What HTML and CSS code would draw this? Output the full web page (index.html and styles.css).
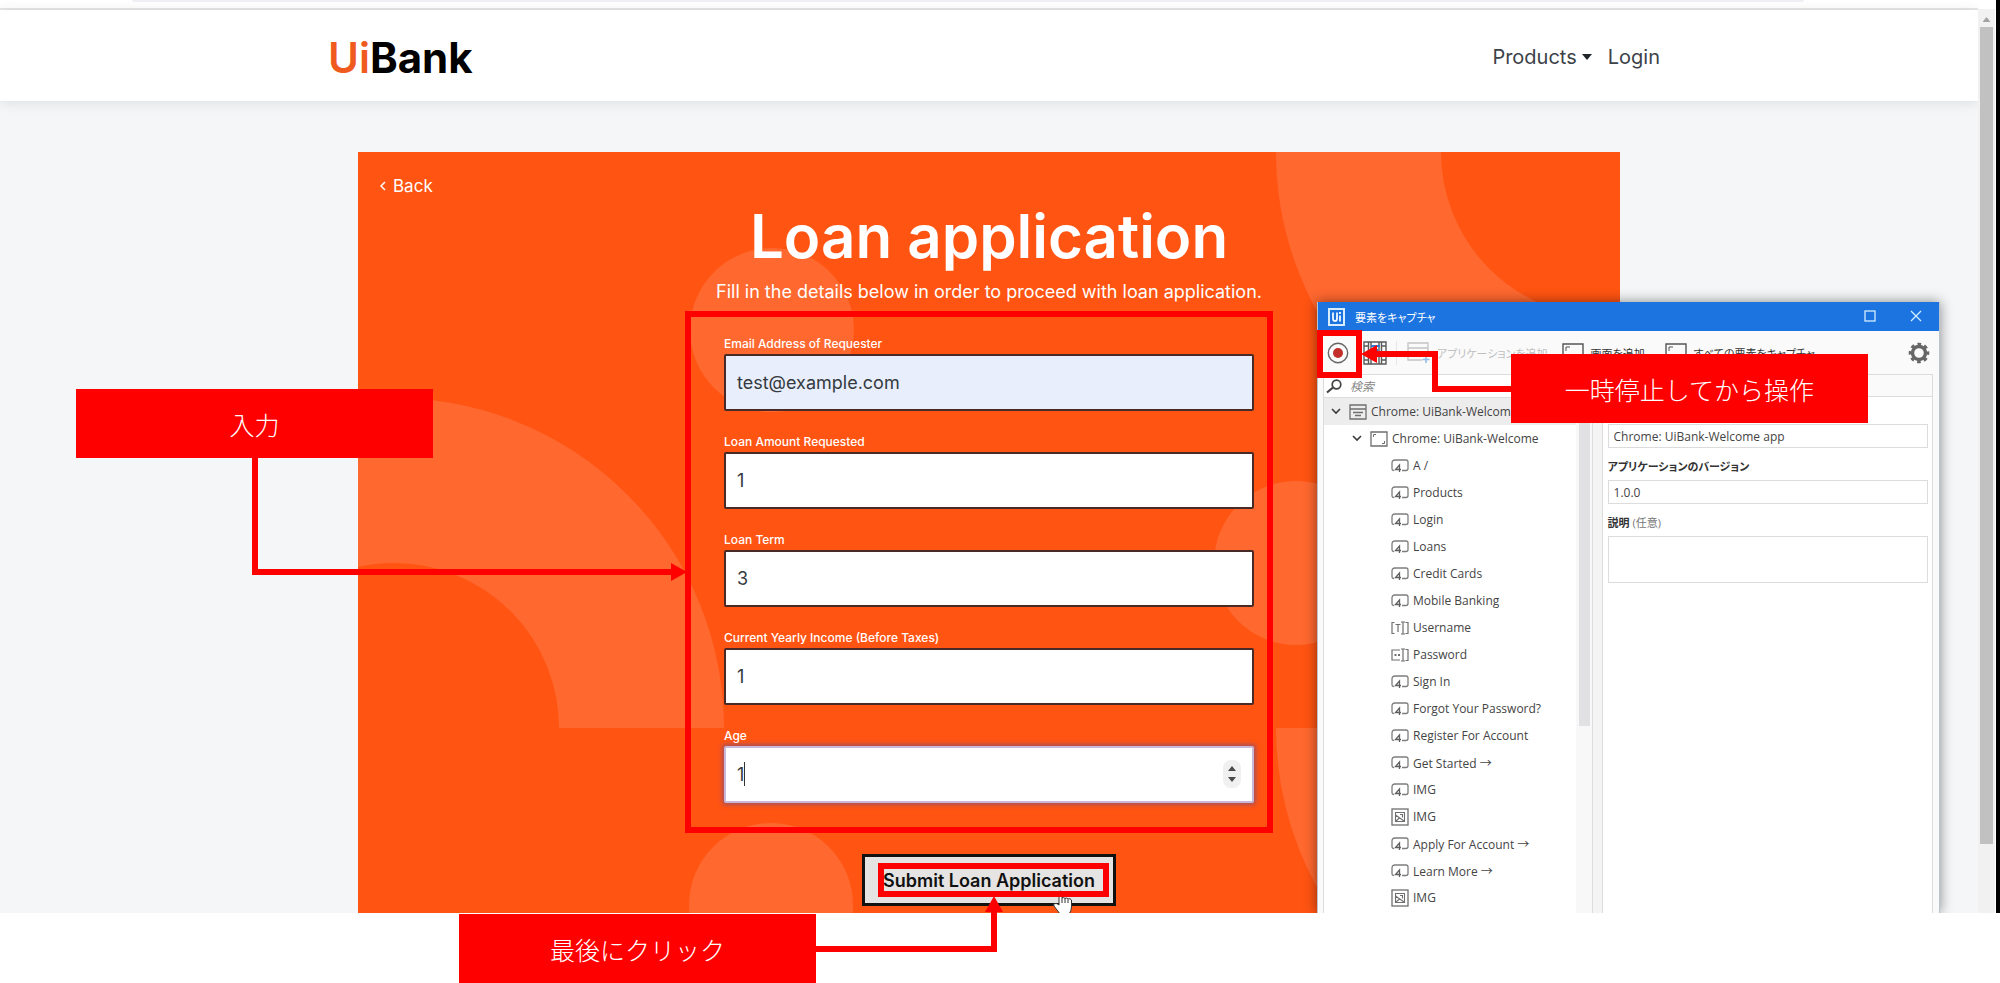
FILE: index.html
```html
<!DOCTYPE html>
<html lang="ja">
<head>
    <meta charset="UTF-8">
    <title>UiBank - Loan application</title>
    <link rel="stylesheet" href="styles.css">
</head>
<body>
    <!-- shared icons -->
    <svg class="sprite" aria-hidden="true">
        <symbol id="i-click" viewBox="0 0 18 14">
            <path d="M3 11.500Q1 11.500 1 9.500V4Q1 1 4 1H15Q17 1 17 3V9.500Q17 11.500 15 11.500H11" fill="none" stroke="#7d7d7d" stroke-width="1.300"/>
            <path d="M8.500 13V6L4.500 10.500H10" fill="none" stroke="#5f5f5f" stroke-width="1.300"/>
        </symbol>
        <symbol id="i-text" viewBox="0 0 18 14">
            <path d="M3.500 1.500H1V12.500H3.500M14.500 1.500H17V12.500H14.500M4.500 3.500H9.500M7 3.500V11M10 1H14M10 13H14M12 1V13" fill="none" stroke="#6f6f6f" stroke-width="1.200"/>
        </symbol>
        <symbol id="i-pass" viewBox="0 0 18 14">
            <path d="M9 2H1V12H9M14.500 1.500H17V12.500H14.500M10 1H14M10 13H14M12 1V13" fill="none" stroke="#6f6f6f" stroke-width="1.200"/>
            <path d="M3.500 6H5.500V8H3.500zM7 6H9V8H7z" fill="#6f6f6f"/>
        </symbol>
        <symbol id="i-img" viewBox="0 0 18 18">
            <rect x="1" y="1" width="16" height="16" fill="none" stroke="#6f6f6f" stroke-width="1.300"/>
            <path d="M4.500 4.500H13.500V13.500H4.500zM4.500 7L13 13M5 13L8.500 10M9 6.500H11.500V9.500" fill="none" stroke="#6f6f6f" stroke-width="1.100"/>
        </symbol>
        <symbol id="i-app" viewBox="0 0 18 16">
            <path d="M1 1H17V15H1zM1 5H17M4 8.500H14M6 11.500H12" fill="none" stroke="#6f6f6f" stroke-width="1.300"/>
        </symbol>
        <symbol id="i-screen" viewBox="0 0 18 16">
            <path d="M1 1H17V15H1z" fill="none" stroke="#6f6f6f" stroke-width="1.300"/>
            <path d="M3.500 6V3.500H6M14.500 10V12.500H12" fill="none" stroke="#6f6f6f"/>
        </symbol>
        <symbol id="i-down" viewBox="0 0 10 7">
            <path d="M1 1L5 5L9 1" fill="none" stroke="#3b3b3b" stroke-width="1.600"/>
        </symbol>
        <symbol id="i-frame" viewBox="0 0 22 20">
            <path d="M1 1H21V19H1z" fill="none" stroke="#555" stroke-width="1.400"/>
            <path d="M4 8V4H8M18 12V16H14" fill="none" stroke="#555"/>
        </symbol>
    </svg>

    <div class="browser">
        <div class="viewport">
            <div class="toolbar-edge"><div class="address"></div></div>
            <header class="site-header">
                <div class="header-inner">
                    <a class="brand" href="#"><span>Ui</span>Bank</a>
                    <nav class="site-nav">
                        <button class="nav-item" type="button">Products<span class="nav-caret"></span></button>
                        <a class="nav-item" href="#">Login</a>
                    </nav>
                </div>
            </header>

            <main class="card">
                <svg class="card-shapes" aria-hidden="true">
                    <g fill="none" stroke="#ff682f" stroke-width="165">
                        <path d="M283.500 576A247.500 247.500 0 0 0 -211.500 576"/>
                        <path d="M1000.500 0A247.500 247.500 0 0 0 1248 247.500"/>
                        <path d="M1000.500 576A247.500 247.500 0 0 0 1248 823.500"/>
                    </g>
                    <g fill="#ff682f">
                        <circle cx="414" cy="178" r="82"/>
                        <circle cx="938" cy="411" r="82"/>
                        <circle cx="413" cy="753" r="82"/>
                    </g>
                </svg>
                <a class="back" href="#"><svg width="6" height="10" viewBox="0 0 6 10"><path d="M5 1L1 5L5 9" fill="none" stroke="#fff" stroke-width="1.500"/></svg>Back</a>
                <form class="loan-form">
                    <h1>Loan application</h1>
                    <p class="lead">Fill in the details below in order to proceed with loan application.</p>
                    <div class="field">
                        <label for="email">Email Address of Requester</label>
                        <input class="filled" id="email" type="email" value="test@example.com">
                    </div>
                    <div class="field">
                        <label for="amount">Loan Amount Requested</label>
                        <input id="amount" type="number" value="1">
                    </div>
                    <div class="field">
                        <label for="term">Loan Term</label>
                        <input id="term" type="number" value="3">
                    </div>
                    <div class="field">
                        <label for="income">Current Yearly Income (Before Taxes)</label>
                        <input id="income" type="number" value="1">
                    </div>
                    <div class="field">
                        <label for="age">Age</label>
                        <input class="active" id="age" type="number" value="1">
                        <span class="text-caret"></span>
                        <svg class="spinner" width="18" height="28" viewBox="0 0 18 28" aria-hidden="true">
                            <rect width="18" height="28" rx="8" fill="#f0f0f0"/>
                            <path d="M5 11L9 6L13 11zM5 17L9 22L13 17z" fill="#4a4a4a"/>
                        </svg>
                    </div>
                    <button class="submit" type="submit">Submit Loan Application</button>
                </form>
            </main>

            <section class="capture">
                <div class="capture-title">
                    <svg width="17" height="18" viewBox="0 0 17 18" aria-hidden="true">
                        <rect x="1" y="1" width="15" height="16" fill="none" stroke="#d8ecff" stroke-width="2"/>
                        <path d="M5 4.500V10.500Q5 13 7 13Q9 13 9 10.500V4.500M12 7.500V13.500M12 4V6" fill="none" stroke="#fff" stroke-width="1.700"/>
                    </svg>
                    <h2>要素をキャプチャ</h2>
                    <button class="win-btn" type="button" aria-label="最大化"><svg width="12" height="12"><rect x="1" y="1" width="10" height="10" fill="none" stroke="#d4efff" stroke-width="1.300"/></svg></button>
                    <button class="win-btn" type="button" aria-label="閉じる"><svg width="12" height="12"><path d="M1 1L11 11M11 1L1 11" stroke="#d4efff" stroke-width="1.300"/></svg></button>
                </div>
                <div class="capture-tools">
                    <button class="tool" type="button" aria-label="記録"><svg width="22" height="22" viewBox="0 0 22 22"><circle cx="11" cy="11" r="9.700" fill="none" stroke="#666" stroke-width="1.400"/><circle cx="11" cy="11" r="5" fill="#c22f2a"/></svg></button>
                    <button class="tool film" type="button" aria-label="録画"><svg width="24" height="24" viewBox="0 0 24 24"><path d="M1 1H23V23H1zM5.500 1V23M8 1V23M16 1V23M18.500 1V23M1 5H5M1 19H5M19 5H23M19 19H23" fill="none" stroke="#5a5a5a" stroke-width="1.400"/><path d="M8 5H17M11 9H15" stroke="#2b7bd6" stroke-width="2"/></svg></button>
                    <button class="tool add-app" type="button" disabled><svg width="23" height="22" viewBox="0 0 23 22"><path d="M15 18H1V1H21V13M1 6H21M4 10H18M4 14H14" fill="none" stroke="#c4c4c4" stroke-width="1.300"/><path d="M19 14V21M15.500 17.500H22.500" stroke="#8fb9e6" stroke-width="1.500"/></svg>アプリケーションを追加</button>
                    <button class="tool add-screen" type="button"><svg width="22" height="20"><use href="#i-frame"/></svg>画面を追加</button>
                    <button class="tool add-all" type="button"><svg width="22" height="20"><use href="#i-frame"/></svg>すべての要素をキャプチャ</button>
                    <button class="tool gear" type="button" aria-label="設定"><svg width="22" height="22" viewBox="0 0 22 22"><circle cx="11" cy="11" r="6.500" fill="none" stroke="#666" stroke-width="3.400"/><circle cx="11" cy="11" r="8.800" fill="none" stroke="#666" stroke-width="3" stroke-dasharray="3.600 3.310" stroke-dashoffset="1.800"/></svg></button>
                </div>
                <div class="capture-body">
                    <div class="tree-panel">
                        <div class="search">
                            <svg width="17" height="15" viewBox="0 0 17 15"><circle cx="10.500" cy="5.500" r="4.300" fill="none" stroke="#444" stroke-width="1.700"/><path d="M7 8.500L1 13.500" stroke="#444" stroke-width="2.200"/></svg>
                            <input type="search" placeholder="検索" aria-label="検索">
                        </div>
                        <div class="tree-wrap">
                            <ul class="tree">
                                <li class="root"><svg width="10" height="7"><use href="#i-down"/></svg><svg width="18" height="16"><use href="#i-app"/></svg>Chrome: UiBank-Welcome</li>
                                <li class="screen"><svg width="10" height="7"><use href="#i-down"/></svg><svg width="18" height="16"><use href="#i-screen"/></svg>Chrome: UiBank-Welcome</li>
                                <li><svg width="18" height="14"><use href="#i-click"/></svg>A /</li>
                                <li><svg width="18" height="14"><use href="#i-click"/></svg>Products</li>
                                <li><svg width="18" height="14"><use href="#i-click"/></svg>Login</li>
                                <li><svg width="18" height="14"><use href="#i-click"/></svg>Loans</li>
                                <li><svg width="18" height="14"><use href="#i-click"/></svg>Credit Cards</li>
                                <li><svg width="18" height="14"><use href="#i-click"/></svg>Mobile Banking</li>
                                <li><svg width="18" height="14"><use href="#i-text"/></svg>Username</li>
                                <li><svg width="18" height="14"><use href="#i-pass"/></svg>Password</li>
                                <li><svg width="18" height="14"><use href="#i-click"/></svg>Sign In</li>
                                <li><svg width="18" height="14"><use href="#i-click"/></svg>Forgot Your Password?</li>
                                <li><svg width="18" height="14"><use href="#i-click"/></svg>Register For Account</li>
                                <li><svg width="18" height="14"><use href="#i-click"/></svg>Get Started →</li>
                                <li><svg width="18" height="14"><use href="#i-click"/></svg>IMG</li>
                                <li><svg width="18" height="18"><use href="#i-img"/></svg>IMG</li>
                                <li><svg width="18" height="14"><use href="#i-click"/></svg>Apply For Account →</li>
                                <li><svg width="18" height="14"><use href="#i-click"/></svg>Learn More →</li>
                                <li><svg width="18" height="18"><use href="#i-img"/></svg>IMG</li>
                            </ul>
                            <div class="tree-scroll"><div class="tree-thumb"></div></div>
                        </div>
                    </div>
                    <div class="splitter"></div>
                    <div class="props">
                        <div class="props-head"></div>
                        <div class="props-fields">
                            <input type="text" value="Chrome: UiBank-Welcome app" aria-label="アプリケーション名">
                            <label for="version">アプリケーションのバージョン</label>
                            <input id="version" type="text" value="1.0.0">
                            <label for="note">説明 <span>(任意)</span></label>
                            <textarea id="note"></textarea>
                        </div>
                    </div>
                </div>
            </section>

            <svg class="pointer" width="22" height="26" viewBox="0 0 22 26" aria-hidden="true">
                <path d="M7 13V3Q7 1 8.500 1Q10 1 10 3V8Q11.500 7 13 8.500Q14.500 7.500 16 9Q18 8 19.500 10V17Q19.500 21 17 24V26H8V24L2 16Q1 14 3 13.500Q5 13 7 15z" fill="#fff" stroke="#333"/>
                <path d="M10 8V13M13 9V13M16 9.500V13" stroke="#333"/>
            </svg>
        </div>
        <div class="scrollbar"><span class="scroll-up"></span><div class="scroll-thumb"></div></div>
        <div class="screen-edge"></div>
    </div>
    <div class="page-bottom"></div>

    <!-- step annotations -->
    <div class="annotations">
        <svg class="connectors" aria-hidden="true">
            <g fill="none" stroke="#f00" stroke-width="6">
                <path d="M255 457V572H673"/>
                <path d="M816 949H994V910"/>
                <path d="M1511 389H1435V354H1375"/>
                <rect x="688" y="314" width="582" height="516"/>
                <rect x="881" y="866" width="225" height="28"/>
                <rect x="1320" y="333" width="39" height="42"/>
            </g>
            <path d="M671 563L687 572L671 581zM985 912L994 896L1003 912zM1377 345L1361 354L1377 363z" fill="#f00"/>
        </svg>
        <div class="callout callout-input">入力</div>
        <div class="callout callout-pause">一時停止してから操作</div>
        <div class="callout callout-click">最後にクリック</div>
    </div>
</body>
</html>
```
FILE: styles.css
```css
* {
    box-sizing: border-box;
}

body {
    font-family: Inter, "Noto Sans CJK JP", sans-serif;
    background-color: #fff;
    color: #212529;
    margin: 0;
    height: 100vh;
    display: flex;
    flex-direction: column;
    position: relative;
    overflow: hidden;
}

button, input, textarea {
    font-family: inherit;
}

.sprite {
    position: absolute;
    width: 0;
    height: 0;
}

/* Browser frame */
.browser {
    flex: 1;
    min-height: 0;
    display: flex;
}

.page-bottom {
    height: 70px;
    flex: none;
}

.viewport {
    flex: 1;
    min-width: 0;
    position: relative;
    overflow: hidden;
    background-color: #f5f6f8;
}

.toolbar-edge {
    height: 10px;
    padding: 0 174px 0 132px;
    background-color: #fff;
    border-bottom: 2px solid #e6e6e8;
}

.address {
    height: 2px;
    background-color: #eff0f5;
    border-radius: 0 0 4px 4px;
}

.scrollbar {
    width: 18px;
    margin-top: 9px;
    padding: 6px 2px 0;
    background-color: #f1f1f1;
    border-right: 1px solid #fff;
}

.scroll-up {
    display: block;
    width: 8px;
    height: 5px;
    margin: 2px auto 5px;
    background-color: #a3a3a3;
    clip-path: polygon(50% 0, 100% 100%, 0 100%);
}

.scroll-thumb {
    height: 91%;
    background-color: #c1c1c1;
}

.screen-edge {
    width: 4px;
    background-color: #000;
}

/* Site header */
.site-header {
    background-color: #fff;
    box-shadow: 0 2px 12px rgba(0, 0, 0, 0.1);
}

.header-inner {
    max-width: 1342px;
    height: 91px;
    margin: 0 auto;
    padding: 3px 0 0 10px;
    display: flex;
    align-items: center;
    justify-content: space-between;
}

.brand {
    font-size: 42px;
    font-weight: 700;
    color: #000;
    text-decoration: none;
}

.brand span {
    font-weight: 600;
    color: #f05a1e;
}

.site-nav {
    display: flex;
    gap: 16px;
}

.nav-item {
    display: flex;
    align-items: center;
    gap: 5px;
    padding: 0;
    border: none;
    background: none;
    font-size: 20px;
    line-height: 28px;
    color: #3c4248;
    text-decoration: none;
}

.nav-caret {
    border: 5px solid transparent;
    border-top: 6px solid #212529;
    border-bottom: 0;
}

/* Loan card */
.card {
    position: relative;
    max-width: 1262px;
    height: 900px;
    margin: 51px auto 0;
    padding: 20px 22px;
    background-color: #ff5412;
    overflow: hidden;
    color: #fff;
}

.card-shapes {
    position: absolute;
    inset: 0;
    width: 100%;
    height: 100%;
}

.back {
    position: relative;
    display: inline-flex;
    align-items: center;
    gap: 7px;
    font-size: 17px;
    line-height: 28px;
    color: #fff;
    text-decoration: none;
}

.loan-form {
    position: relative;
    display: flex;
    flex-direction: column;
    width: 530px;
    margin: 0 auto;
}

.loan-form h1 {
    margin: 0 0 8px;
    font-size: 60px;
    line-height: 72px;
    font-weight: 600;
    text-align: center;
    white-space: nowrap;
}

.lead {
    align-self: center;
    margin: 0 0 30px;
    font-size: 18px;
    line-height: 24px;
    white-space: nowrap;
}

.field {
    position: relative;
    margin-bottom: 21px;
}

.field label {
    display: block;
    font-size: 12px;
    line-height: 20px;
    font-weight: 500;
}

.field input {
    display: block;
    width: 100%;
    height: 57px;
    padding: 0 11px;
    border: 2px solid #4a2a26;
    border-radius: 2px;
    background-color: #fff;
    font-size: 18px;
    color: #343a40;
    appearance: textfield;
    outline: none;
}

.field .filled {
    background-color: #e8eefc;
}

.field .active {
    border-color: #c9b9d8;
    box-shadow: 0 0 4px 2px rgba(90, 80, 160, 0.5);
}

.text-caret {
    position: absolute;
    left: 20px;
    bottom: 17px;
    width: 1px;
    height: 24px;
    background-color: #333;
}

.spinner {
    position: absolute;
    right: 13px;
    bottom: 15px;
}

.submit {
    align-self: center;
    width: 254px;
    height: 52px;
    margin-top: 30px;
    padding: 0;
    border: 3px solid #111;
    background-color: #e6e4e2;
    font-size: 18px;
    font-weight: 600;
    color: #111;
}

.pointer {
    position: absolute;
    left: 1052px;
    top: 890px;
}

/* Capture window */
.capture {
    position: absolute;
    left: 1317px;
    top: 302px;
    bottom: 0;
    width: 623px;
    display: flex;
    flex-direction: column;
    background-color: #fafafa;
    border-left: 1px solid #b9c4d0;
    border-right: 1px solid #b9c4d0;
    box-shadow: 0 0 12px rgba(0, 0, 0, 0.45);
    font-family: "Open Sans", "Noto Sans CJK JP", sans-serif;
    font-size: 12px;
    font-feature-settings: "palt";
    color: #444;
}

.capture-title {
    display: flex;
    align-items: center;
    height: 29px;
    padding-left: 10px;
    background-color: #1b74e0;
    color: #fff;
}

.capture-title h2 {
    flex: 1;
    margin: 0 0 0 10px;
    font-size: 11px;
    font-weight: 400;
}

.win-btn {
    width: 46px;
    height: 29px;
    padding: 0;
    border: none;
    background: none;
}

.capture-tools {
    display: flex;
    align-items: center;
    height: 43px;
    padding: 0 9px;
}

.tool {
    display: flex;
    align-items: center;
    gap: 7px;
    padding: 0;
    border: none;
    background: none;
    font-size: 11px;
    font-feature-settings: "palt";
    color: #333;
    white-space: nowrap;
}

.tool:disabled {
    color: #c0c0c0;
}

.film {
    margin-left: 14px;
    padding-right: 9px;
    border-right: 1px solid #e6e6e6;
}

.add-app {
    margin-left: 10px;
}

.add-screen {
    margin-left: 14px;
}

.add-all {
    margin-left: 20px;
}

.gear {
    margin-left: auto;
}

.capture-body {
    flex: 1;
    min-height: 0;
    display: flex;
    padding: 0 6px 0 5px;
}

.tree-panel {
    width: 270px;
    display: flex;
    flex-direction: column;
    background-color: #fff;
    border: 1px solid #dcdcdc;
    border-bottom: none;
}

.search {
    display: flex;
    align-items: center;
    gap: 7px;
    height: 23px;
    padding-left: 2px;
    border-bottom: 1px solid #dcdcdc;
}

.search input {
    flex: 1;
    min-width: 0;
    padding: 0;
    border: none;
    background: none;
    font-size: 12px;
    font-style: italic;
    outline: none;
}

.search input::placeholder {
    color: #888;
}

.tree-wrap {
    flex: 1;
    min-height: 0;
    display: flex;
}

.tree {
    flex: 1;
    margin: 0;
    padding: 0;
    list-style: none;
}

.tree li {
    display: flex;
    align-items: center;
    gap: 4px;
    height: 27px;
    padding-left: 67px;
    white-space: nowrap;
}

.tree .root svg:first-child, .tree .screen svg:first-child {
    margin-right: 4px;
}

.tree .root {
    padding-left: 7px;
    background-color: #ededed;
}

.tree .screen {
    padding-left: 28px;
}

.tree-scroll {
    width: 16px;
    padding: 0 2px 0 3px;
    background-color: #f8f8f8;
}

.tree-thumb {
    height: 328px;
    background-color: #e1e1e4;
}

.splitter {
    width: 9px;
    margin: 0 auto;
    background-color: #f4f4f4;
}

.props {
    width: 332px;
    background-color: #fff;
    border: 1px solid #dcdcdc;
    border-bottom: none;
}

.props-head {
    height: 22px;
    background-color: #fafafa;
    border-bottom: 1px solid #dcdcdc;
}

.props-fields {
    display: flex;
    flex-direction: column;
    padding: 27px 4px 0 5px;
}

.props-fields input, .props-fields textarea {
    height: 24px;
    padding: 0 5px;
    border: 1px solid #dcdcdc;
    background-color: #fff;
    font-size: 12px;
    color: #444;
    outline: none;
    resize: none;
}

.props-fields textarea {
    height: 47px;
}

.props-fields label {
    line-height: 20px;
    margin: 9px 0 3px;
    font-size: 11px;
    font-weight: 700;
    color: #333;
}

.props-fields span {
    font-weight: 400;
    color: #777;
}

/* Annotations */
.annotations {
    position: absolute;
    inset: 0;
    pointer-events: none;
}

.connectors {
    position: absolute;
    inset: 0;
    width: 100%;
    height: 100%;
}

.callout {
    position: absolute;
    width: 357px;
    height: 69px;
    display: flex;
    align-items: center;
    justify-content: center;
    background-color: #f00;
    color: #fff;
    font-family: "Noto Sans CJK JP", sans-serif;
    font-size: 25px;
    font-weight: 300;
}

.callout-input {
    left: 76px;
    top: 389px;
}

.callout-pause {
    left: 1511px;
    top: 354px;
}

.callout-click {
    left: 459px;
    top: 914px;
}
```
